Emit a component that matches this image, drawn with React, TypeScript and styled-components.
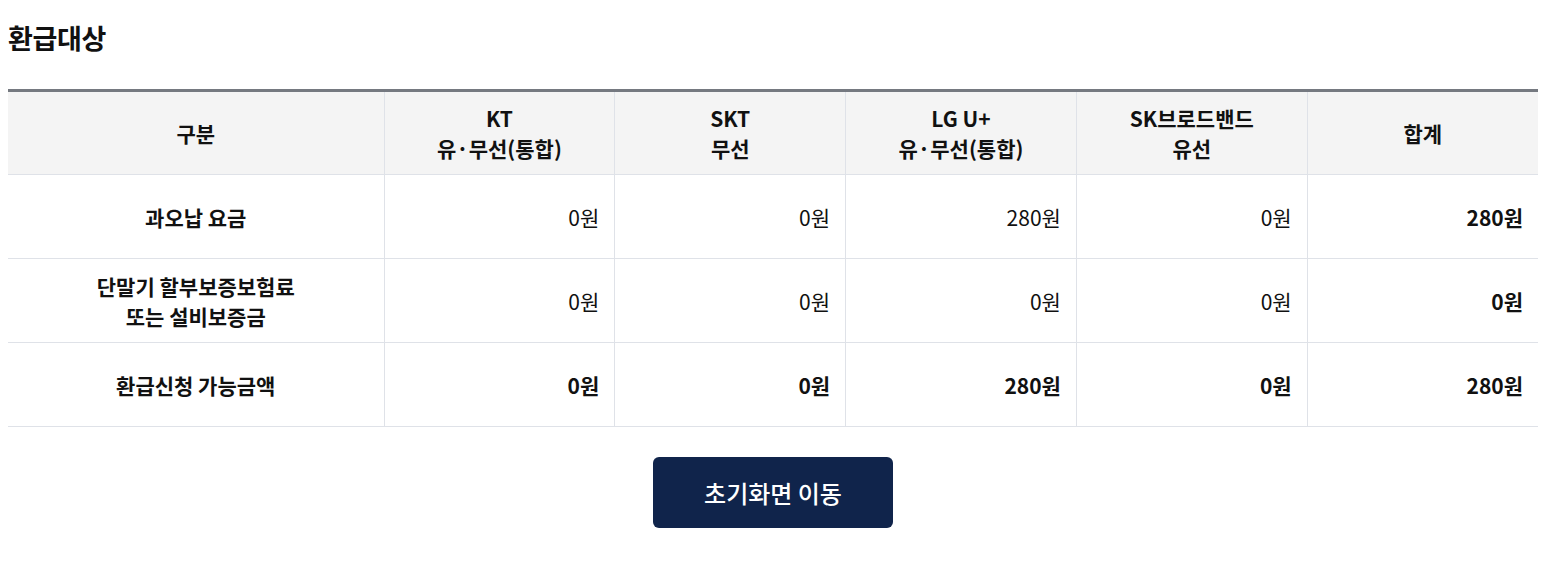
import React from "react";
import styled, { createGlobalStyle } from "styled-components";

const Global = createGlobalStyle`
  body {
    margin: 8px;
    font-family: "Noto Sans CJK KR", "Noto Sans", sans-serif;
    color: #111;
    background: #fff;
  }
`;

const Wrap = styled.div`
  width: 1530px;
`;

const Title = styled.h2`
  margin: 0;
  padding-top: 13px;
  font-size: 27px;
  font-weight: 700;
  line-height: 34px;
  color: #111;
  letter-spacing: -0.3px;
`;

const Table = styled.table`
  margin-top: 34px;
  width: 100%;
  border-collapse: collapse;
  border-top: 3px solid #757980;
  table-layout: fixed;
  font-size: 21px;
  line-height: 30px;
`;

const Th = styled.th`
  background: #f4f4f4;
  font-weight: 700;
  height: 82px;
  padding: 0 12px;
  text-align: center;
  border-bottom: 1px solid #dfe2e8;
  border-left: 1px solid #dfe2e8;
  &:first-child { border-left: none; }
`;

const RowHead = styled.th`
  font-weight: 700;
  height: 83px;
  padding: 0 12px;
  text-align: center;
  border-bottom: 1px solid #dfe2e8;
`;

const Td = styled.td<{ $bold?: boolean }>`
  height: 83px;
  padding: 0 15px 0 12px;
  text-align: right;
  font-weight: ${(p) => (p.$bold ? 700 : 400)};
  border-bottom: 1px solid #dfe2e8;
  border-left: 1px solid #dfe2e8;
`;

const Actions = styled.div`
  display: flex;
  justify-content: center;
  margin-top: 30px;
`;

const Button = styled.button`
  width: 240px;
  height: 71px;
  border: none;
  border-radius: 6px;
  background: #10244b;
  color: #fff;
  font-family: "Noto Sans CJK KR", "Noto Sans", sans-serif;
  font-size: 24px;
  font-weight: 500;
  cursor: pointer;
`;

const headers = [
  ["구분"],
  ["KT", "유·무선(통합)"],
  ["SKT", "무선"],
  ["LG U+", "유·무선(통합)"],
  ["SK브로드밴드", "유선"],
  ["합계"],
];

const rows: { label: string[]; values: string[]; bold: boolean }[] = [
  { label: ["과오납 요금"], values: ["0원", "0원", "280원", "0원", "280원"], bold: false },
  { label: ["단말기 할부보증보험료", "또는 설비보증금"], values: ["0원", "0원", "0원", "0원", "0원"], bold: false },
  { label: ["환급신청 가능금액"], values: ["0원", "0원", "280원", "0원", "280원"], bold: true },
];

const Lines = ({ lines }: { lines: string[] }) => (
  <>
    {lines.map((l, i) => (
      <React.Fragment key={i}>
        {i > 0 && <br />}
        {l}
      </React.Fragment>
    ))}
  </>
);

export default function App() {
  return (
    <Wrap>
      <Global />
      <Title>환급대상</Title>
      <Table>
        <colgroup>
          <col style={{ width: 376 }} />
          <col />
          <col />
          <col />
          <col />
          <col />
        </colgroup>
        <thead>
          <tr>
            {headers.map((h, i) => (
              <Th key={i}>
                <Lines lines={h} />
              </Th>
            ))}
          </tr>
        </thead>
        <tbody>
          {rows.map((r, i) => (
            <tr key={i}>
              <RowHead>
                <Lines lines={r.label} />
              </RowHead>
              {r.values.map((v, j) => (
                <Td key={j} $bold={r.bold || j === r.values.length - 1}>
                  {v}
                </Td>
              ))}
            </tr>
          ))}
        </tbody>
      </Table>
      <Actions>
        <Button>초기화면 이동</Button>
      </Actions>
    </Wrap>
  );
}
